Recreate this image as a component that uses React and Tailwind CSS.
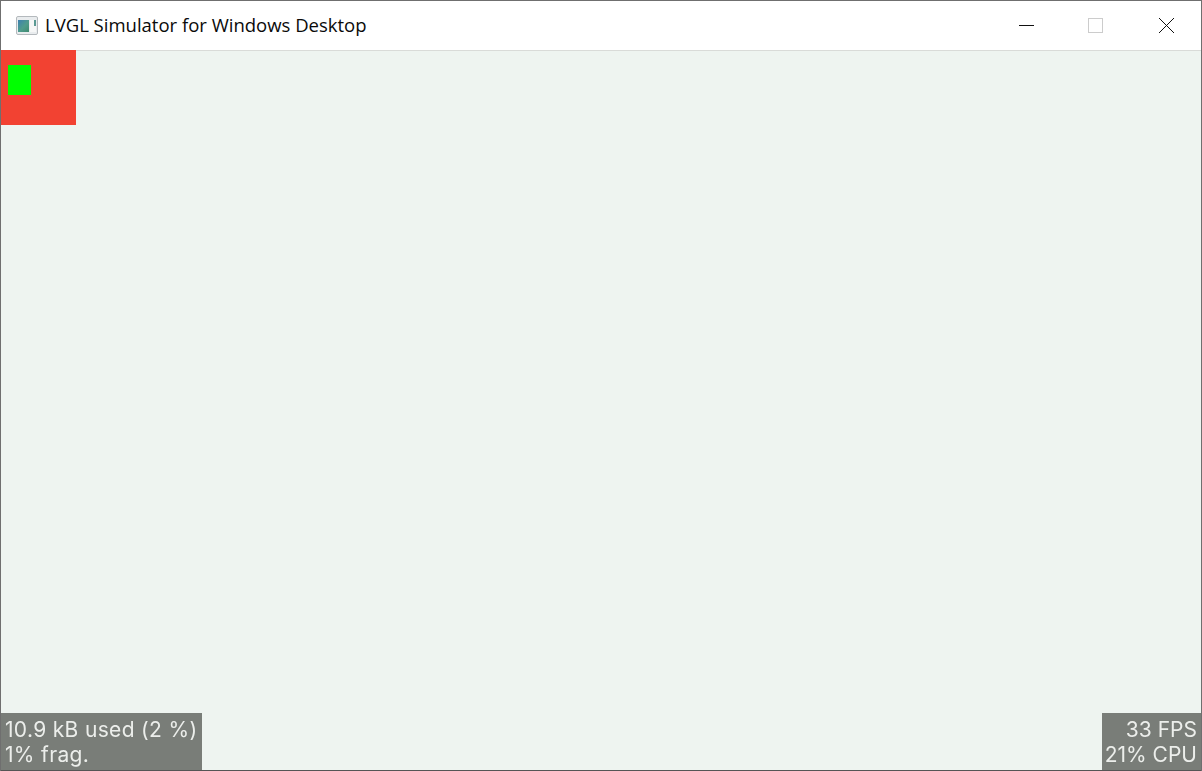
function AppIcon() {
    return (
        <svg width="22" height="19" viewBox="0 0 22 19" className="shrink-0 blur-[0.3px]">
            <defs>
                <linearGradient id="pane" x1="0" y1="0" x2="1" y2="1">
                    <stop offset="0" stopColor="#3d7fb0" />
                    <stop offset="0.55" stopColor="#4f9c8c" />
                    <stop offset="1" stopColor="#3f8a70" />
                </linearGradient>
            </defs>
            <rect x="0.5" y="0.5" width="21" height="18" rx="1.5" fill="#e9ecee" stroke="#b4b9bd" />
            <rect x="2" y="4" width="11" height="12" fill="url(#pane)" />
            <rect x="14" y="4" width="6" height="12" fill="#f6f7f7" />
            <rect x="18" y="4" width="2" height="6" fill="#5b9a94" />
        </svg>
    )
}

function StatBox({ lines, className }) {
    return (
        <div className={`absolute bottom-0 h-[57px] bg-[#797d78] pt-[4px] text-[21px] leading-[25px] text-[#eceeeb] font-['Inter',sans-serif] blur-[0.4px] ${className}`}>
            {lines.map((line) => (
                <div key={line}>{line}</div>
            ))}
        </div>
    )
}

export default function App() {
    return (
        <div className="flex h-[771px] w-[1202px] flex-col overflow-hidden border-x border-t border-[#6f6f6f] bg-white">
            <header className="flex h-[49px] shrink-0 items-center bg-white pl-[15px]">
                <AppIcon />
                <span className="mb-[2px] ml-[7px] font-['Open_Sans',sans-serif] text-[18.5px] text-[#0a0a0a]">LVGL Simulator for Windows Desktop</span>
                <div className="ml-auto flex items-center">
                    <div className="w-[70px] pl-[28px]">
                        <svg width="15" height="15" viewBox="0 0 15 15" stroke="#111" shapeRendering="crispEdges" className="block">
                            <path d="M0 7.5H15" />
                        </svg>
                    </div>
                    <div className="w-[70px] pl-[27px]"><div className="h-[15px] w-[15px] border border-[#cccccc]" /></div>
                    <div className="w-[70px] pl-[28px]">
                        <svg width="15" height="15" viewBox="0 0 15 15" stroke="#111" fill="none" className="block">
                            <path d="M0 0L15 15M15 0L0 15" />
                        </svg>
                    </div>
                </div>
            </header>
            <main className="relative flex-1 border-b border-[#555] bg-[#eef4f0] shadow-[inset_0_1px_0_#d9dbd8]">
                <div className="h-[75px] w-[75px] bg-[#f24232] pl-[7px] pt-[15px]">
                    <div className="h-[30px] w-[23px] bg-[#00ff00]" />
                </div>
                <StatBox lines={['10.9 kB used (2 %)', '1% frag.']} className="left-0 w-[201px] pl-[4px] tracking-[0.33px]" />
                <StatBox lines={['33 FPS', '21% CPU']} className="right-0 w-[99px] pr-[4px] text-right" />
            </main>
        </div>
    )
}
